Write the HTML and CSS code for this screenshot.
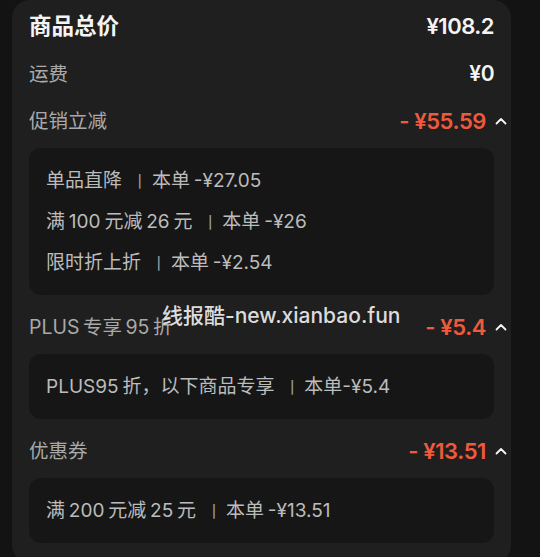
FILE: index.html
```html
<!DOCTYPE html>
<html lang="zh-CN">
<head>
    <meta charset="UTF-8">
    <meta name="viewport" content="width=device-width, initial-scale=1.0">
    <title>价格明细</title>
    <link rel="stylesheet" href="styles.css">
</head>
<body>
    <div class="card">
        <div class="row row-total">
            <span class="title">商品总价</span>
            <span class="amount">¥108.2</span>
        </div>
        <div class="row">
            <span class="label">运费</span>
            <span class="amount amount-sm">¥0</span>
        </div>

        <div class="row">
            <span class="label">促销立减</span>
            <span class="discount">-&nbsp;¥55.59<svg class="chev" viewBox="0 0 12 8"><polyline points="1.5,6.5 6,2 10.5,6.5"/></svg></span>
        </div>
        <div class="detail">
            <p>单品直降 <span class="sep">丨</span>本单 -¥27.05</p>
            <p>满 100 元减 26 元 <span class="sep">丨</span>本单 -¥26</p>
            <p>限时折上折 <span class="sep">丨</span>本单 -¥2.54</p>
        </div>

        <div class="row row-section">
            <span class="label">PLUS 专享 95 折</span>
            <span class="discount">-&nbsp;¥5.4<svg class="chev" viewBox="0 0 12 8"><polyline points="1.5,6.5 6,2 10.5,6.5"/></svg></span>
        </div>
        <div class="detail">
            <p>PLUS95 折，以下商品专享 <span class="sep">丨</span>本单-¥5.4</p>
        </div>

        <div class="row row-section">
            <span class="label">优惠券</span>
            <span class="discount">-&nbsp;¥13.51<svg class="chev" viewBox="0 0 12 8"><polyline points="1.5,6.5 6,2 10.5,6.5"/></svg></span>
        </div>
        <div class="detail">
            <p>满 200 元减 25 元 <span class="sep">丨</span>本单 -¥13.51</p>
        </div>
    </div>

    <div class="watermark">线报酷-new.xianbao.fun</div>
</body>
</html>
```

FILE: styles.css
```css
body {
    margin: 0;
    background: #131313;
    font-family: Inter, "Noto Sans CJK SC", sans-serif;
    position: relative;
    height: 557px;
    overflow: hidden;
}
.card {
    margin: 0 29px 0 12px;
    padding: 2px 17px 20px 17px;
    background: #1f1f1f;
    border-radius: 18px;
}
.row {
    height: 47px;
    display: flex;
    align-items: center;
    justify-content: space-between;
    line-height: 30px;
}
.row-total {
    height: 48px;
}
.row-section {
    height: 46px;
    margin-top: 9px;
}
.title {
    color: #f4f4f4;
    font-size: 22.5px;
    font-weight: 700;
}
.label {
    color: #a9a9a9;
    font-size: 19.5px;
    word-spacing: -2px;
}
.amount {
    color: #f4f4f4;
    font-size: 22px;
    font-weight: 600;
    letter-spacing: -0.5px;
}
.amount-sm {
    font-size: 21px;
}
.discount {
    display: flex;
    align-items: center;
    color: #ef5a3d;
    font-size: 22px;
    font-weight: 600;
    margin-right: -13px;
    letter-spacing: -0.4px;
}
.chev {
    width: 12px;
    height: 8px;
    margin-left: 9px;
    fill: none;
    stroke: #f4f4f4;
    stroke-width: 1.8;
    stroke-linecap: round;
    stroke-linejoin: round;
}
.detail {
    margin-top: 4px;
    padding: 12px 17px;
    background: #161616;
    border-radius: 12px;
}
.detail p {
    margin: 0;
    height: 41px;
    line-height: 41px;
    color: #bcbcbc;
    font-size: 19px;
    word-spacing: -1.5px;
}
.sep {
    color: #a0a0a0;
    font-size: 16px;
    line-height: 1;
    margin: 0 4px 0 6px;
}
.watermark {
    position: absolute;
    left: 162px;
    top: 301px;
    color: rgba(240, 240, 240, 0.92);
    font-size: 21px;
    font-weight: 500;
    line-height: 30px;
}
```
